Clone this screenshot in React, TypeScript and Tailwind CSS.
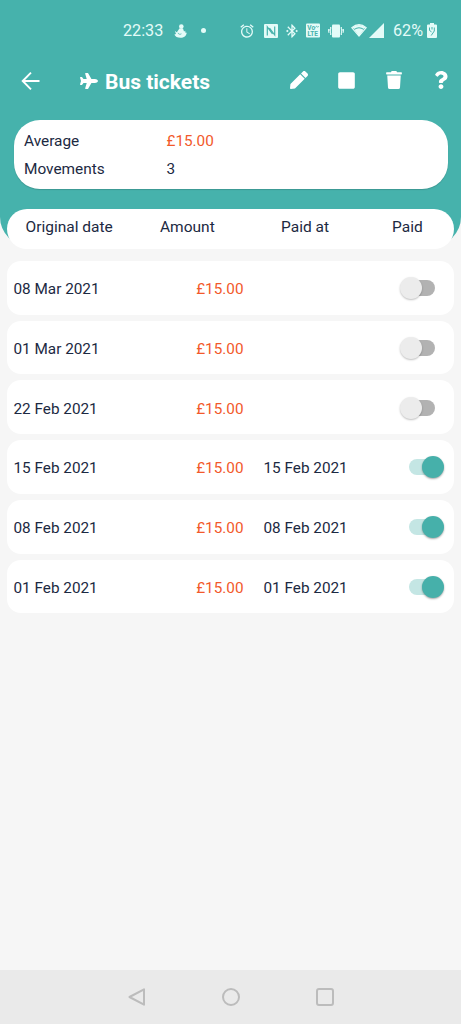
import type { ReactNode } from 'react';
import { FaPen, FaPlane, FaQuestion, FaStop, FaTrash } from 'react-icons/fa';
import { MdAlarm, MdBluetoothConnected } from 'react-icons/md';

type Movement = { date: string; amount: string; paidAt?: string };

const movements: Movement[] = [
  { date: '08 Mar 2021', amount: '£15.00' },
  { date: '01 Mar 2021', amount: '£15.00' },
  { date: '22 Feb 2021', amount: '£15.00' },
  { date: '15 Feb 2021', amount: '£15.00', paidAt: '15 Feb 2021' },
  { date: '08 Feb 2021', amount: '£15.00', paidAt: '08 Feb 2021' },
  { date: '01 Feb 2021', amount: '£15.00', paidAt: '01 Feb 2021' },
];

function StatusBar() {
  return (
    <div className="flex h-[61px] items-center pl-[123px] text-[16.200px] text-[#e4fbf8]">
      <span className="w-[51px] pt-[2px]">22:33</span>
      <svg className="h-[14px] w-[13px]" viewBox="0 0 13 14" fill="currentColor">
        <circle cx="7.300" cy="2.600" r="2.300" />
        <path d="M5.300 4.500h3.700l1 3 1.400-.8-.2 1.900 1.500.2c-.2 3-2.700 5-6.200 5C3.500 13.800 1 12.500.4 10.500L2 10 .8 6.800l1.700 1.500C3.500 7.500 4.300 6.500 5.300 4.500z" />
        <path d="M4 8.800c.4 1.500 2 1.900 3.400 1" fill="none" stroke="#46b2ac" strokeWidth=".8" />
      </svg>
      <span className="ml-[14px] size-[5px] rounded-full bg-[#e4fbf8]" />
      <MdAlarm className="ml-[33px] size-4" />
      <svg className="ml-[9px] h-[14px] w-[14px]" viewBox="0 0 14 14">
        <rect width="14" height="14" rx="1" fill="currentColor" />
        <path d="M3.300 11.500V2.800L8.500 10M5.500 4l5.200 7V2.500" fill="none" stroke="#46b2ac" strokeWidth="1.200" />
      </svg>
      <MdBluetoothConnected className="ml-[6px] size-4" />
      <svg className="ml-[6px] h-[15px] w-[14px]" viewBox="0 0 14 15">
        <rect y="0.500" width="14" height="14" rx="1" fill="currentColor" />
        <text x="1.300" y="7" fontSize="6.500" fontWeight="700" fill="#46b2ac">Vo</text>
        <path d="M9.500 4.500c.6-1.500 1.200-1.500 1.700-.7s1 .5 1.300-.8" fill="none" stroke="#46b2ac" strokeWidth=".8" />
        <text x="1.500" y="13.300" fontSize="6.500" fontWeight="700" fill="#46b2ac">LTE</text>
      </svg>
      <svg className="ml-[8px] h-[14px] w-4" viewBox="0 0 16 14">
        <rect x="4" y="0.500" width="8" height="13" rx="1" fill="currentColor" />
        <path d="M2.700 3v2l-.7 1 .7 1-.7 1 .7 1v2M13.300 3v2l.7 1-.7 1 .7 1-.7 1v2M.7 5v1.500L0 7.500l.7 1M15.300 5v1.500l.7 1-.7 1" fill="none" stroke="currentColor" strokeWidth="1.200" />
      </svg>
      <svg className="ml-[7px] h-[15px] w-[16px]" viewBox="0 0 17 15">
        <path d="M.8 4.500Q8.500-2 16.200 4.500L8.500 13.500z" fill="none" stroke="currentColor" strokeWidth="1.200" strokeLinejoin="round" />
        <path d="M3.600 6.800Q8.500 3.300 13.400 6.800L8.500 13.500z" fill="currentColor" />
        <path d="M1.500 4Q8.500-.5 15.500 4L13.800 5.800Q8.500 2.300 3.200 5.800z" fill="currentColor" />
      </svg>
      <svg className="ml-[2px] h-[15px] w-[15px]" viewBox="0 0 15 15">
        <path d="M15 0v15H0z" fill="currentColor" />
      </svg>
      <span className="ml-[9px] w-[34px] pt-[2px]">62%</span>
      <svg className="h-[15px] w-[10px]" viewBox="0 0 10 15">
        <path d="M3 0h4v1.500h2q1 0 1 1V14q0 1-1 1H1q-1 0-1-1V2.500q0-1 1-1h2z" fill="currentColor" />
        <path d="M2.500 4.500v3l2 1.300M4.200 12.500L7.300 8V4.500M5 4v2.500" fill="none" stroke="#46b2ac" strokeWidth="1" />
      </svg>
    </div>
  );
}

function AppBar() {
  return (
    <div className="flex h-[39px] items-center pl-[21px] text-white">
      <svg className="size-5" viewBox="0 0 20 20" fill="none" stroke="currentColor" strokeWidth="1.900">
        <path d="M18.500 10H2M10 1.700 1.700 10l8.300 8.300" />
      </svg>
      <FaPlane className="ml-[39px] size-[18px]" />
      <h1 className="ml-[7px] w-[184.500px] pt-[3px] text-[21px] leading-6 font-bold">Bus tickets</h1>
      <button aria-label="Edit" className="mb-px"><FaPen className="size-[18px]" /></button>
      <button aria-label="Stop" className="mb-px ml-[29px]"><FaStop className="size-[19px]" /></button>
      <button aria-label="Delete" className="mb-px ml-[29px]"><FaTrash className="size-[18px]" /></button>
      <button aria-label="Help" className="mb-px ml-[29px]"><FaQuestion className="size-[18px]" /></button>
    </div>
  );
}

function Switch({ on }: { on: boolean }) {
  return (
    <div role="switch" aria-checked={on} className="relative mt-px h-[22px] w-[44px]">
      <div className={on ? 'absolute top-[3px] left-[9px] h-4 w-[31px] rounded-full bg-[#c4e6e4]' : 'absolute top-[3px] left-[4px] h-4 w-[31px] rounded-full bg-[#b2b2b2]'} />
      <div className={on ? 'absolute top-0 right-0 size-[22px] rounded-full bg-[#46b0aa] shadow-[0_1px_2px_rgba(0,0,0,0.35)]' : 'absolute top-0 left-0 size-[22px] rounded-full bg-[#ececec] shadow-[0_1px_2px_rgba(0,0,0,0.25)]'} />
    </div>
  );
}

function SummaryLine({ label, children }: { label: string; children: ReactNode }) {
  return (
    <div className="flex h-7 items-center">
      <span className="w-[142.500px] text-[15.400px]">{label}</span>
      {children}
    </div>
  );
}

export default function App() {
  return (
    <div className="flex h-[1024px] w-[461px] flex-col overflow-hidden bg-[#f6f6f6] font-['Roboto',sans-serif] text-[15.300px] text-[#1c2942]">
      <header className="h-[246px] shrink-0 rounded-b-[29px] bg-[#46b2ac]">
        <StatusBar />
        <AppBar />
        <section className="mx-[13.500px] mt-[19.500px] h-[69px] rounded-[26px] bg-white pt-[8px] pl-[10.500px] shadow-[0_1px_1px_rgba(0,0,0,0.15)]">
          <SummaryLine label="Average"><span className="text-[#f2592b]">£15.00</span></SummaryLine>
          <SummaryLine label="Movements"><span>3</span></SummaryLine>
        </section>
      </header>
      <main className="-mt-[37.500px] flex-1 px-[7px]">
        <div className="flex h-[40.500px] rounded-[20px] bg-white pt-[9px] pl-[18.500px] text-[15.500px] leading-[18px]">
          <span className="w-[134.500px]">Original date</span>
          <span className="w-[121px]">Amount</span>
          <span className="w-[111px]">Paid at</span>
          <span>Paid</span>
        </div>
        <ul className="mt-[11.800px] flex flex-col gap-[6px]">
          {movements.map((m) => (
            <li key={m.date} className="flex h-[53.750px] items-center rounded-[14px] bg-white pl-[6.500px]">
              <span className="w-[130px] pt-[4px]">{m.date}</span>
              <span className="w-[100px] pt-[4px] text-right text-[#f2592b]">{m.amount}</span>
              <span className="ml-[20px] w-[136px] pt-[4px]">{m.paidAt}</span>
              <Switch on={Boolean(m.paidAt)} />
            </li>
          ))}
        </ul>
      </main>
      <nav className="flex h-[54px] shrink-0 items-center justify-center gap-[76px] bg-[#eaeaea] text-[#bcbcbc]">
        <svg className="size-[18px]" viewBox="0 0 18 18" fill="none" stroke="currentColor" strokeWidth="2" strokeLinejoin="round">
          <path d="M16 1.300v15.400L1.500 9z" />
        </svg>
        <svg className="size-[18px]" viewBox="0 0 18 18" fill="none" stroke="currentColor" strokeWidth="2">
          <circle cx="9" cy="9" r="8" />
        </svg>
        <svg className="size-[18px]" viewBox="0 0 18 18" fill="none" stroke="currentColor" strokeWidth="2">
          <rect x="1" y="1" width="16" height="16" rx="2" />
        </svg>
      </nav>
    </div>
  );
}
